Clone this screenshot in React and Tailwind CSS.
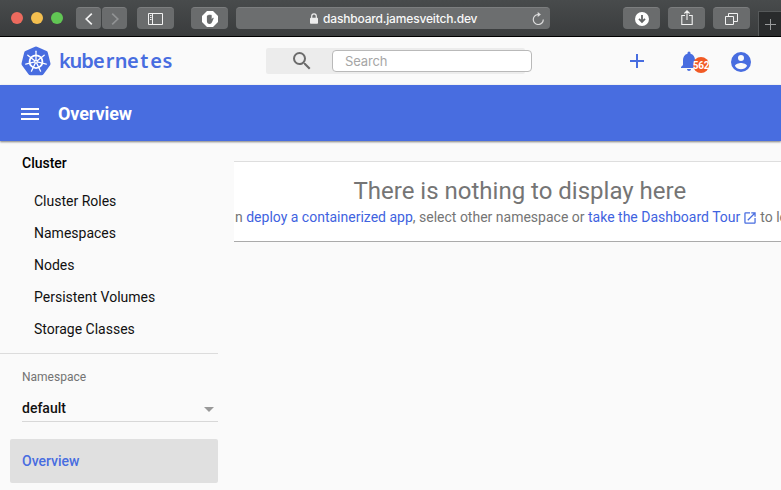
import React from "react";

const spokes = [0, 1, 2, 3, 4, 5, 6];

function KubernetesMark() {
  return (
    <svg className="ml-[21px] h-[31px] w-[30px] shrink-0" viewBox="0 0 30 31" fill="none">
      <path
        d="M15 2.8 L24.6 7.2 L27.2 17.8 L20.6 27 H9.4 L2.8 17.8 L5.4 7.2 Z"
        fill="#486de0"
        stroke="#486de0"
        strokeWidth="4.6"
        strokeLinejoin="round"
      />
      <circle cx="15" cy="15.7" r="6.4" stroke="#fff" strokeWidth="1.8" />
      <circle cx="15" cy="15.7" r="1.7" fill="#fff" />
      {spokes.map((i) => (
        <path
          key={i}
          d="M15 14.5V5.2"
          stroke="#fff"
          strokeWidth="1.3"
          strokeLinecap="round"
          transform={`rotate(${(i * 360) / 7} 15 15.7)`}
        />
      ))}
      <circle cx="15" cy="15.7" r="0.7" fill="#486de0" />
    </svg>
  );
}

const chromeButton =
  "flex h-[22px] shrink-0 items-center justify-center rounded-[4px] border-t border-[#7c7e7f] bg-[#6a6c6d]";

function BrowserBar() {
  return (
    <div className="flex h-[37px] items-start border-b border-black bg-linear-to-b from-[#484b4c] to-[#3a3c3d] pt-[7px]">
      <div className="ml-[11px] flex h-[22px] w-[52px] shrink-0 items-center justify-between">
        <span className="size-3 rounded-full bg-[#ec6a5e]" />
        <span className="size-3 rounded-full bg-[#f4bf4f]" />
        <span className="size-3 rounded-full bg-[#61c654]" />
      </div>
      <div className={chromeButton + " ml-[13px] w-[25px]"}>
        <svg className="h-3 w-2" viewBox="0 0 8 12" fill="none" stroke="#f2f2f2" strokeWidth="1.7">
          <path d="M6.8 .7 1.2 6l5.6 5.3" />
        </svg>
      </div>
      <div className={chromeButton + " ml-px w-[25px]"}>
        <svg className="h-3 w-2" viewBox="0 0 8 12" fill="none" stroke="#919394" strokeWidth="1.7">
          <path d="M1.2 .7 6.8 6 1.2 11.3" />
        </svg>
      </div>
      <div className={chromeButton + " ml-[10px] w-[37px]"}>
        <svg className="h-3 w-[15px]" viewBox="0 0 15 12" fill="none" stroke="#f2f2f2">
          <path d="M.5.5h14v11H.5zM4.500.5v11M2 2.500h1.500M2 4.500h1.500M2 6.500h1.500" />
        </svg>
      </div>
      <div className={chromeButton + " ml-[17px] w-[37px]"}>
        <svg className="size-4" viewBox="0 0 16 16">
          <path d="M5 0h6l5 5v6l-5 5H5l-5-5V5z" fill="#fff" />
          <path
            d="M4.900 5c0-.9 1-.9 1.100-.2.1-1.200 1-1.300 1.200-.6.2-.9 1.200-.9 1.300 0 .3-.6 1.200-.5 1.200.4v3.600l.9-1.200c.5-.6 1.300-.2 1 .4l-1.500 3.700c-.5 1.300-1.300 2-2.500 2-1.700 0-2.700-1.100-2.700-3z"
            fill="#6a6c6d"
          />
        </svg>
      </div>
      <div className="ml-2 flex h-[22px] w-[314px] shrink-0 items-center rounded-[4px] border-t border-[#7c7e7f] bg-[#6c6e6f]">
        <svg className="ml-[74px] h-[11px] w-[8px] shrink-0" viewBox="0 0 8 11" fill="none">
          <path d="M1.7 5V3.2a2.3 2.3 0 0 1 4.6 0V5" stroke="#ededed" strokeWidth="1.2" />
          <rect y="4.7" width="8" height="6" rx=".8" fill="#ededed" />
        </svg>
        <svg className="ml-[5px] h-5 w-[156px] shrink-0" viewBox="0 0 156 20">
          <text
            x="0"
            y="13.5"
            textLength="154.5"
            fill="#f8f8f8"
            className="font-['Inter',sans-serif] text-[12px] font-medium"
          >
            dashboard.jamesveitch.dev
          </text>
        </svg>
        <svg className="ml-[53px] size-[13px] shrink-0" viewBox="0 0 13 13" fill="none">
          <path d="M6 2.500a5 5 0 1 0 5.300 5" stroke="#dcdcdc" strokeWidth="1.2" />
          <path d="M5.700 0v5l3.200-2.500z" fill="#dcdcdc" />
        </svg>
      </div>
      <div className={chromeButton + " ml-[73px] w-[37px]"}>
        <svg className="size-[14px]" viewBox="0 0 14 14">
          <circle cx="7" cy="7" r="7" fill="#fff" />
          <path d="M7 3v6.500M4 6.900l3 3 3-3" fill="none" stroke="#626465" strokeWidth="1.8" />
        </svg>
      </div>
      <div className={chromeButton + " ml-2 w-[37px]"}>
        <svg className="mb-[2px] h-[15px] w-3" viewBox="0 0 12 15" fill="none" stroke="#f2f2f2" strokeWidth="1.1">
          <path d="M4 5.500H.8v9h10.400v-9H8M6 10V.9M3.400 3.500 6 .8l2.600 2.700" />
        </svg>
      </div>
      <div className={chromeButton + " ml-2 w-[37px]"}>
        <svg className="h-3 w-[13px]" viewBox="0 0 13 12" fill="none" stroke="#f2f2f2">
          <path d="M.5 3.500h8v8h-8zM3.500 3V.5h9v8H9" />
        </svg>
      </div>
      <div className="mt-1 ml-2 flex h-[25px] min-w-0 flex-1 items-center justify-center border-t border-l border-[#56595a] bg-[#292b2c]">
        <svg className="mt-px ml-px size-[11px]" viewBox="0 0 11 11" stroke="#9a9c9d">
          <path d="M5.500 0v11M0 5.500h11" />
        </svg>
      </div>
    </div>
  );
}

function AppToolbar() {
  return (
    <header className="flex h-12 items-center bg-[#fafafa]">
      <KubernetesMark />
      <svg className="ml-2 h-7 w-[115px] shrink-0" viewBox="0 0 115 28">
        <text
          x="5.800 17 28.500 39.800 51.200 62.200 73.800 85.200 97 108.400"
          y="21.300"
          textAnchor="middle"
          fill="#486de0"
          className="font-['Noto_Sans',sans-serif] text-[20px] font-semibold"
        >
          kubernetes
        </text>
      </svg>
      <div className="ml-[92px] flex h-[26px] w-[259px] shrink-0 items-center rounded-[2px] bg-[#ececec]">
        <svg className="ml-[24px] size-[24px] shrink-0" viewBox="0 0 24 24" fill="#6b6b6b">
          <path d="M15.5 14h-.79l-.28-.27A6.47 6.47 0 0 0 16 9.500 6.500 6.500 0 1 0 9.500 16c1.610 0 3.090-.59 4.230-1.570l.27.280v.79l5 4.990L20.490 19l-4.990-5zm-6 0C7.010 14 5 11.990 5 9.500S7.010 5 9.500 5 14 7.010 14 9.500 11.990 14 9.500 14z" />
        </svg>
        <div className="ml-[18px] flex h-[22px] w-[200px] shrink-0 items-center rounded-[4px] border border-[#b9b9b9] bg-white pt-px pl-3 font-['Inter',sans-serif] text-[13px] tracking-[-0.15px] text-[#a6a6a6]">
          Search
        </div>
      </div>
      <svg className="ml-[105px] size-[14px] shrink-0" viewBox="0 0 14 14" fill="#486de0">
        <path d="M6 0h2v6h6v2H8v6H6V8H0V6h6z" />
      </svg>
      <div className="relative ml-[33px] size-6 shrink-0">
        <svg className="size-6" viewBox="0 0 24 24" fill="#486de0">
          <path d="M12 22c1.100 0 2-.9 2-2h-4c0 1.100.9 2 2 2zm6-6v-5c0-3.070-1.630-5.640-4.500-6.320V4a1.500 1.500 0 0 0-3 0v.68C7.640 5.360 6 7.920 6 11v5l-2 2v1h16v-1l-2-2z" />
        </svg>
        <div className="absolute top-2 left-[16px] flex size-4 items-center justify-center rounded-full bg-[#f15a24] font-['Roboto',sans-serif] text-[10px] font-bold tracking-[-0.3px] text-white">
          562
        </div>
      </div>
      <svg className="mt-px ml-[28px] size-6 shrink-0" viewBox="0 0 24 24" fill="#486de0">
        <path d="M12 2a10 10 0 1 0 0 20 10 10 0 0 0 0-20zm0 3a3 3 0 1 1 0 6 3 3 0 0 1 0-6zm0 14.200a7.200 7.200 0 0 1-6-3.220c.03-1.990 4-3.080 6-3.080s5.970 1.090 6 3.080a7.200 7.200 0 0 1-6 3.220z" />
      </svg>
    </header>
  );
}

const clusterItems = ["Cluster Roles", "Namespaces", "Nodes", "Persistent Volumes", "Storage Classes"];

function Sidebar() {
  return (
    <nav className="w-[218px] shrink-0 text-[14px] leading-5 text-[#111]">
      <div className="pt-3 pl-[22px] font-medium text-black">Cluster</div>
      <ul className="mt-3 pl-[34px]">
        {clusterItems.map((item) => (
          <li key={item} className="flex h-8 items-center">
            {item}
          </li>
        ))}
      </ul>
      <div className="mt-2 border-t border-[#dcdcdc]" />
      <div className="mt-[13px] ml-[22px] text-[12px] text-[#737373]">Namespace</div>
      <div className="mt-[11px] ml-[22px] flex h-[24px] items-start justify-between border-b border-[#d8d8d8] pr-1 font-medium">
        default
        <svg className="mt-[9px] h-[5px] w-[10px]" viewBox="0 0 10 5" fill="#999">
          <path d="M0 0h10L5 5z" />
        </svg>
      </div>
      <div className="mt-[17px] ml-[10px] flex h-11 items-center rounded-[2px] bg-[#e0e0e0] pl-3 font-medium text-[#486de0]">
        Overview
      </div>
    </nav>
  );
}

export default function App() {
  return (
    <div className="h-[490px] w-[781px] overflow-hidden bg-[#fafafa] font-['Roboto',sans-serif]">
      <BrowserBar />
      <AppToolbar />
      <div className="flex h-14 items-center bg-[#486de0] shadow-[0_1px_2px_rgba(0,0,0,0.5)]">
        <svg className="mt-px ml-[21px] h-3 w-[18px]" viewBox="0 0 18 12" fill="#fff">
          <path d="M0 0h18v2H0zM0 5h18v2H0zM0 10h18v2H0z" />
        </svg>
        <h1 className="ml-[19px] text-[18px] font-bold tracking-[-0.1px] text-white">Overview</h1>
      </div>
      <div className="flex">
        <Sidebar />
        <main className="ml-4 min-w-0 flex-1 pt-5">
          <section className="flex h-[81px] flex-col overflow-hidden border-t border-b border-t-[#dedede] border-b-[#aaa] bg-white pt-[13px] text-[#757575]">
            <h2 className="ml-[119.5px] text-[24px] leading-8 whitespace-nowrap">There is nothing to display here</h2>
            <p className="ml-px flex items-center text-[14px] leading-5 whitespace-pre">
              n <a className="text-[#3f63e0]">deploy a containerized app</a>, select other namespace or{" "}
              <a className="flex items-center text-[#3f63e0]">
                take the Dashboard Tour
                <svg className="mt-px ml-1 size-3" viewBox="2.500 2.500 19 19" fill="#486de0">
                  <path d="M19 19H5V5h7V3H5a2 2 0 0 0-2 2v14a2 2 0 0 0 2 2h14c1.100 0 2-.9 2-2v-7h-2v7zM14 3v2h3.590l-9.830 9.830 1.410 1.410L19 6.410V10h2V3h-7z" />
                </svg>
              </a>
              <span className="ml-1">to learn more</span>
            </p>
          </section>
        </main>
      </div>
    </div>
  );
}
